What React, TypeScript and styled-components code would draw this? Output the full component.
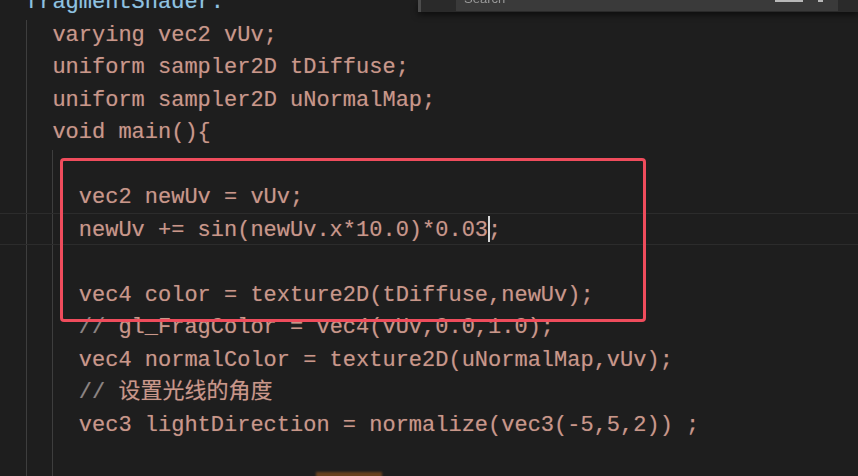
import styled, { createGlobalStyle } from 'styled-components'

const GlobalStyle = createGlobalStyle`
  html, body {
    margin: 0;
    padding: 0;
    background: #1e1e1e;
  }
`

type Tone = 'key' | 'str' | 'cmt'

const tones: Record<Tone, string> = {
  key: '#8ec3e2',
  str: '#c9978a',
  cmt: '#8c8583',
}

const Editor = styled.div`
  position: relative;
  width: 858px;
  height: 476px;
  overflow: hidden;
  background: #1e1e1e;
  font-family: 'Liberation Mono', 'Noto Sans CJK SC', monospace;
  font-size: 22px;
  line-height: 32.5px;
  white-space: pre;
`

const Code = styled.div`
  margin-top: -13px;
  padding-left: 26px;
`

const Block = styled.div`
  border-left: 1px solid #3e3e3e;
  padding-left: calc(2ch - 1px);
`

const Line = styled.div<{ $current?: boolean }>`
  position: relative;
  height: 32.5px;

  &::before {
    content: '';
    display: ${({ $current }) => ($current ? 'block' : 'none')};
    position: absolute;
    left: -200px;
    right: -900px;
    top: -2px;
    bottom: 2px;
    border-top: 1px solid #2c2c2c;
    border-bottom: 1px solid #2c2c2c;
    pointer-events: none;
  }
`

const Token = styled.span<{ $tone: Tone }>`
  color: ${({ $tone }) => tones[$tone]};
  text-shadow: 0 0 1px ${({ $tone }) => tones[$tone]}66;
`

const Caret = styled.span`
  display: inline-block;
  width: 2px;
  height: 26px;
  margin-right: -2px;
  vertical-align: -6px;
  background: #d6d6d6;
`

const Bracket = styled.span`
  display: inline-block;
  width: 5ch;
  height: 32.5px;
  vertical-align: top;
  transform: translateY(-3px);
  background: linear-gradient(#6b4320, #4a2f18);
  filter: blur(1px);
`

const Annotation = styled.div`
  position: absolute;
  left: 60px;
  top: 158px;
  width: 586px;
  height: 164px;
  box-sizing: border-box;
  border: 3px solid #ef4c5c;
  border-radius: 4px;
  pointer-events: none;
`

const FindWidget = styled.div`
  position: absolute;
  top: 0;
  left: 418px;
  right: 0;
  height: 12px;
  display: flex;
  align-items: flex-start;
  padding-left: 35px;
  padding-right: 20px;
  background: #2a2a2a;
  border-left: 3px solid #4c4c4c;
  box-shadow: 0 3px 6px rgba(0, 0, 0, 0.55);
`

const FindInput = styled.div`
  flex: 1;
  height: 11px;
  display: flex;
  align-items: flex-start;
  overflow: hidden;
  background: #3a3a3a;
  font-family: 'Liberation Sans', sans-serif;
  font-size: 13px;
  line-height: 13px;
`

const Placeholder = styled.span`
  flex: 1;
  margin-top: -8px;
  padding-left: 8px;
  color: #9a9a9a;
  filter: blur(0.6px);
`

const Toggle = styled.span<{ $w: number }>`
  width: ${({ $w }) => $w}px;
  height: 2px;
  margin-right: 15px;
  background: #b8b8b8;
  filter: blur(0.5px);
`

function T({ t, c }: { t: Tone; c: string }) {
  return <Token $tone={t}>{c}</Token>
}

export default function App() {
  return (
    <>
      <GlobalStyle />
      <Editor>
        <Code>
          <Line>
            <T t="key" c="fragmentShader:" />
          </Line>
          <Block>
            <Line><T t="str" c="varying vec2 vUv;" /></Line>
            <Line><T t="str" c="uniform sampler2D tDiffuse;" /></Line>
            <Line><T t="str" c="uniform sampler2D uNormalMap;" /></Line>
            <Line><T t="str" c="void main(){" /></Line>
            <Block>
              <Line />
              <Line><T t="str" c="vec2 newUv = vUv;" /></Line>
              <Line $current>
                <T t="str" c="newUv += sin(newUv.x*10.0)*0.03" />
                <Caret />
                <T t="str" c=";" />
              </Line>
              <Line />
              <Line><T t="str" c="vec4 color = texture2D(tDiffuse,newUv);" /></Line>
              <Line>
                <T t="cmt" c="// " />
                <T t="str" c="gl_FragColor = vec4(vUv,0.0,1.0);" />
              </Line>
              <Line><T t="str" c="vec4 normalColor = texture2D(uNormalMap,vUv);" /></Line>
              <Line>
                <T t="cmt" c="// " />
                <T t="str" c="设置光线的角度" />
              </Line>
              <Line><T t="str" c="vec3 lightDirection = normalize(vec3(-5,5,2)) ;" /></Line>
              <Line />
              <Line>
                {' '.repeat(18)}
                <Bracket />
              </Line>
            </Block>
          </Block>
        </Code>
        <Annotation />
        <FindWidget>
          <FindInput>
            <Placeholder>Search</Placeholder>
            <Toggle $w={28} />
            <Toggle $w={5} />
          </FindInput>
        </FindWidget>
      </Editor>
    </>
  )
}
